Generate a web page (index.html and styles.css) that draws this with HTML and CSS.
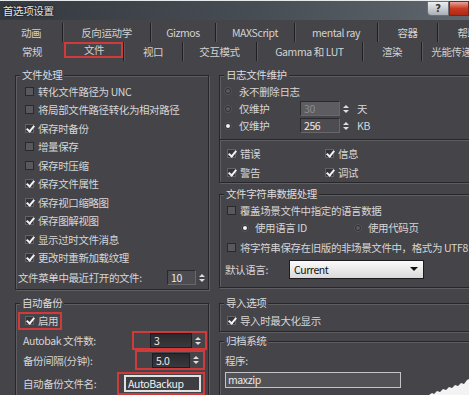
FILE: index.html
```html
<!DOCTYPE html>
<html lang="zh-CN">
<head>
  <meta charset="UTF-8" />
  <title>首选项设置</title>
  <link rel="stylesheet" href="styles.css">
</head>
<body>

  <div class="dialog">
    <div class="titlebar">
      <span class="title">首选项设置</span>
      <div class="winbtns">
        <span class="btn-help">?</span>
        <span class="btn-close"></span>
      </div>
    </div>

    <div class="tabs">
      <div class="tabrow row1">
        <span class="tab">动画</span>
        <span class="tab">反向运动学</span>
        <span class="tab">Gizmos</span>
        <span class="tab">MAXScript</span>
        <span class="tab">mental ray</span>
        <span class="tab">容器</span>
        <span class="tab">帮助</span>
      </div>
      <div class="tabrow row2">
        <span class="tab">常规</span>
        <span class="tab active">文件</span>
        <span class="tab">视口</span>
        <span class="tab">交互模式</span>
        <span class="tab">Gamma 和 LUT</span>
        <span class="tab">渲染</span>
        <span class="tab">光能传递</span>
      </div>
    </div>

    <div class="panel">
      <div class="col">
        <fieldset class="group g-files">
          <legend>文件处理</legend>
          <div class="row"><span class="cb"></span>转化文件路径为 UNC</div>
          <div class="row"><span class="cb"></span>将局部文件路径转化为相对路径</div>
          <div class="row"><span class="cb on"></span>保存时备份</div>
          <div class="row"><span class="cb"></span>增量保存</div>
          <div class="row"><span class="cb"></span>保存时压缩</div>
          <div class="row"><span class="cb on"></span>保存文件属性</div>
          <div class="row"><span class="cb on"></span>保存视口缩略图</div>
          <div class="row"><span class="cb on"></span>保存图解视图</div>
          <div class="row"><span class="cb on"></span>显示过时文件消息</div>
          <div class="row"><span class="cb on"></span>更改时重新加载纹理</div>
          <div class="row recent">
            <span>文件菜单中最近打开的文件:</span>
            <span class="spin">
              <span class="field w29">10</span>
              <span class="arrows"><i class="up"></i><i class="down"></i></span>
            </span>
          </div>
        </fieldset>

        <fieldset class="group g-auto">
          <legend>自动备份</legend>
          <div class="row r-enable">
            <span class="mark mark-enable"><span class="cb on"></span>启用</span>
          </div>
          <div class="row r-label r-count">
            <span>Autobak 文件数:</span>
            <span class="mark mark-count">
              <span class="field dark w42">3</span>
              <span class="arrows"><i class="up"></i><i class="down"></i></span>
            </span>
          </div>
          <div class="row r-label r-interval">
            <span>备份间隔(分钟):</span>
            <span class="mark mark-interval">
              <span class="field dark w38">5.0</span>
              <span class="arrows"><i class="up"></i><i class="down"></i></span>
            </span>
          </div>
          <div class="row r-label r-name">
            <span>自动备份文件名:</span>
            <span class="mark mark-name"><span class="input">AutoBackup</span></span>
          </div>
        </fieldset>
      </div>

      <div class="col">
        <fieldset class="group g-log">
          <legend>日志文件维护</legend>
          <div class="row r-radio r-never"><span class="rb"></span>永不删除日志</div>
          <div class="row r-radio">
            <span class="rb"></span><span class="keep">仅维护</span>
            <span class="spin">
              <span class="field w40 off">30</span>
              <span class="arrows"><i class="up"></i><i class="down"></i></span>
            </span>
            <span class="unit">天</span>
          </div>
          <div class="row r-radio">
            <span class="rb on"></span><span class="keep">仅维护</span>
            <span class="spin">
              <span class="field w40">256</span>
              <span class="arrows"><i class="up"></i><i class="down"></i></span>
            </span>
            <span class="unit">KB</span>
          </div>
          <div class="sep"></div>
          <div class="checks">
            <div class="row"><span class="cb on"></span>错误</div>
            <div class="row"><span class="cb on"></span>信息</div>
            <div class="row"><span class="cb on"></span>警告</div>
            <div class="row"><span class="cb on"></span>调试</div>
          </div>
        </fieldset>

        <fieldset class="group g-str">
          <legend>文件字符串数据处理</legend>
          <div class="row r-override"><span class="cb"></span>覆盖场景文件中指定的语言数据</div>
          <div class="row r-lang">
            <span class="opt"><span class="rb on"></span>使用语言 ID</span>
            <span class="opt"><span class="rb"></span>使用代码页</span>
          </div>
          <div class="row r-utf"><span class="cb"></span>将字符串保存在旧版的非场景文件中，格式为 UTF8</div>
          <div class="row r-default">
            <span class="deflabel">默认语言:</span>
            <span class="select">Current<i class="caret"></i></span>
          </div>
        </fieldset>

        <fieldset class="group g-imp">
          <legend>导入选项</legend>
          <div class="row r-imp"><span class="cb on"></span>导入时最大化显示</div>
        </fieldset>

        <fieldset class="group g-arc">
          <legend>归档系统</legend>
          <div class="prog">程序:</div>
          <div class="prog-input">maxzip</div>
        </fieldset>
      </div>
    </div>
  </div>

  <svg class="tear" width="40" height="20" viewBox="0 0 40 20">
    <polygon points="0,20 3,18 5,19 8,16 11,17 14,14 17,15 20,12 23,13 26,10 29,11 32,8 35,9 38,5 40,4 40,20" fill="#f3f3f3"/>
  </svg>

</body>
</html>
```

FILE: styles.css
```css
:root {
  --bg: #454449;
  --text: #d6d6d6;
  --line-dark: #27262a;
  --line-light: #5e5d62;
  --mark: #d03a3a;
}

* {
  box-sizing: border-box;
}

body {
  margin: 0;
  width: 469px;
  height: 395px;
  overflow: hidden;
  position: relative;
  background: var(--bg);
  color: var(--text);
  font-family: "Noto Sans CJK SC", "Noto Sans", sans-serif;
  font-size: 10.5px;
  letter-spacing: -0.4px;
}

/* title bar */
.titlebar {
  height: 20px;
  display: flex;
  align-items: center;
  padding-left: 3px;
  border-top: 1px solid #e6e9ec;
  background: linear-gradient(90deg, #353a40 0%, #474d54 55%, #60666d 100%);
}

.title {
  color: #e4e4e4;
  text-shadow: 0 0 3px #000;
}

.winbtns {
  margin-left: auto;
  align-self: flex-start;
  display: flex;
}

.btn-help {
  width: 22px;
  height: 15px;
  border: 1px solid #6b7076;
  border-radius: 0 0 0 4px;
  background: linear-gradient(#eceef0, #a9afb5);
  color: #333;
  font: bold 10px "DejaVu Sans", sans-serif;
  line-height: 13px;
  text-align: center;
}

.btn-close {
  width: 20px;
  height: 15px;
  border: 1px solid #6e2a20;
  background: linear-gradient(#eaa596, #c83a22 50%, #ad2914);
}

/* tabs */
.tabs {
  padding-top: 3px;
}

.tabrow {
  display: grid;
  height: 19px;
}

.row1 {
  grid-template-columns: 62px 88px 65px 79px 83px 60px 60px;
}

.row2 {
  grid-template-columns: 64px 59px 59px 74px 106px 59px 60px;
}

.tab {
  text-align: center;
  line-height: 19px;
  white-space: nowrap;
  color: #d2d2d2;
}

.tab + .tab {
  border-left: 1px solid #1f1e22;
  box-shadow: inset 1px 0 0 #5a595e;
}

.tab.active {
  align-self: start;
  height: 16px;
  line-height: 16px;
  outline: 2px solid var(--mark);
  outline-offset: -2px;
}

/* panel */
.panel {
  display: grid;
  grid-template-columns: 194px 260px;
  column-gap: 10px;
  padding: 7px 0 0 15px;
}

.col {
  display: flex;
  flex-direction: column;
}

.group {
  margin: 0;
  padding: 0;
  min-width: 0;
  border: 1px solid var(--line-dark);
  box-shadow: inset 1px 1px 0 var(--line-light), 1px 1px 0 var(--line-light);
}

.group legend {
  margin-left: 4px;
  padding: 0 2px;
  line-height: 14px;
  color: #dcdcdc;
  background: var(--bg);
}

.row {
  display: flex;
  align-items: center;
  height: 18.5px;
  padding-left: 9px;
  white-space: nowrap;
}

/* checkbox + radio */
.cb {
  position: relative;
  flex: none;
  width: 9px;
  height: 9px;
  margin-right: 4px;
  background: #59585d;
  border: 1px solid #2a292d;
}

.cb.on {
  background: #353438;
  border-color: #626166;
}

.cb.on::after {
  content: "";
  position: absolute;
  left: 2px;
  top: -1px;
  width: 3px;
  height: 6px;
  border: solid #f2f2f2;
  border-width: 0 2px 2px 0;
  transform: rotate(40deg);
}

.rb {
  position: relative;
  flex: none;
  width: 8px;
  height: 8px;
  margin-right: 7px;
  border-radius: 50%;
  background: #2f2e32;
  border: 1px solid #58575c;
}

.rb::after {
  content: "";
  position: absolute;
  left: 1px;
  top: 1px;
  width: 4px;
  height: 4px;
  border-radius: 50%;
  background: #5c5b60;
}

.rb.on::after {
  background: #f4f4f4;
}

/* spinners */
.spin {
  display: flex;
  align-items: center;
  height: 15px;
}

.field {
  height: 15px;
  padding-left: 3px;
  line-height: 13px;
  color: #ececec;
  background: #4d4c51;
  border: 1px solid #2a292d;
  border-right-color: #68676c;
  border-bottom-color: #68676c;
}

.field.off {
  background: #5d5c61;
  color: #8d8d8d;
}

.field.dark {
  background: linear-gradient(#2a292d, #3a393d);
  border-color: #1e1d21;
}

.w29 { width: 29px; }
.w38 { width: 38px; }
.w40 { width: 40px; }
.w42 { width: 42px; }

.arrows {
  width: 11px;
  height: 15px;
  display: flex;
  flex-direction: column;
  align-items: center;
  justify-content: center;
  gap: 2px;
}

.arrows i {
  width: 0;
  height: 0;
  border-left: 3px solid transparent;
  border-right: 3px solid transparent;
}

.arrows .up {
  border-bottom: 3px solid #dedede;
}

.arrows .down {
  border-top: 3px solid #dedede;
}

/* 文件处理 */
.g-files {
  padding-bottom: 1px;
}

.recent {
  height: 21px;
  padding-left: 2px;
}

.recent .spin {
  margin-left: auto;
  margin-right: 1px;
}

/* 自动备份 */
.g-auto {
  margin-top: 6px;
  flex: 1;
}

.mark {
  display: flex;
  align-items: center;
  outline: 2px solid var(--mark);
  outline-offset: -2px;
}

.r-enable {
  height: 21px;
  padding-left: 2px;
}

.mark-enable {
  width: 44px;
  height: 18px;
  padding-left: 7px;
}

.r-label {
  padding-left: 7px;
}

.r-label .mark {
  margin-left: auto;
  justify-content: flex-end;
}

.r-count {
  height: 19px;
}

.mark-count {
  width: 75px;
  height: 19px;
  margin-right: 1px;
  padding-right: 4px;
}

.r-interval {
  height: 20px;
}

.mark-interval {
  width: 70px;
  height: 20px;
  margin-right: 3px;
  padding-right: 4px;
}

.r-name {
  height: 23px;
  margin-top: 2px;
}

.mark-name {
  width: 88px;
  height: 23px;
  margin-right: 3px;
  padding: 3px 4px 3px 7px;
}

.input {
  width: 100%;
  height: 100%;
  padding-left: 2px;
  line-height: 13px;
  color: #f2f2f2;
  background: #3e3d41;
  border: 2px solid #e2e2e2;
}

/* 日志文件维护 */
.r-radio {
  height: 17px;
  padding-left: 4px;
}

.r-never {
  height: 18px;
}

.keep {
  width: 61px;
}

.unit {
  margin-left: 6px;
}

.sep {
  margin-top: 5px;
  border-top: 1px solid var(--line-dark);
  box-shadow: 0 1px 0 var(--line-light);
}

.checks {
  display: grid;
  grid-template-columns: 105px 1fr;
  margin-top: 4px;
}

.checks .row {
  height: 19px;
  padding-left: 7px;
}

.checks .row:nth-child(even) {
  padding-left: 0;
}

/* 文件字符串数据处理 */
.g-str {
  margin-top: 4px;
  padding-bottom: 7px;
}

.r-override {
  height: 18px;
  padding-left: 7px;
}

.r-lang {
  height: 17px;
  padding-left: 21px;
}

.opt {
  display: flex;
  align-items: center;
  width: 113px;
}

.opt .rb {
  margin-right: 6px;
}

.r-utf {
  height: 22px;
  padding-left: 7px;
}

.r-default {
  height: 22px;
  padding-left: 5px;
}

.deflabel {
  width: 64px;
}

.select {
  display: flex;
  align-items: center;
  width: 135px;
  height: 19px;
  padding-left: 4px;
  color: #111;
  background: linear-gradient(#fbfbfb, #d9d9d9);
  border: 1px solid #1c1b1f;
}

.caret {
  margin-left: auto;
  margin-right: 5px;
  width: 0;
  height: 0;
  border-left: 4px solid transparent;
  border-right: 4px solid transparent;
  border-top: 4px solid #111;
}

/* 导入选项 */
.g-imp {
  margin-top: 8px;
  padding-bottom: 1px;
}

.r-imp {
  height: 20px;
  padding-left: 7px;
}

/* 归档系统 */
.g-arc {
  margin-top: 2px;
  flex: 1;
}

.prog {
  height: 16px;
  margin-top: 5px;
  padding-left: 5px;
  line-height: 16px;
}

.prog-input {
  width: 176px;
  height: 16px;
  margin: 3px 0 0 5px;
  padding-left: 2px;
  line-height: 13px;
  color: #e8e8e8;
  background: #535257;
  border: 1px solid #c4c4c4;
}

.tear {
  position: absolute;
  right: 0;
  bottom: 0;
}
```
